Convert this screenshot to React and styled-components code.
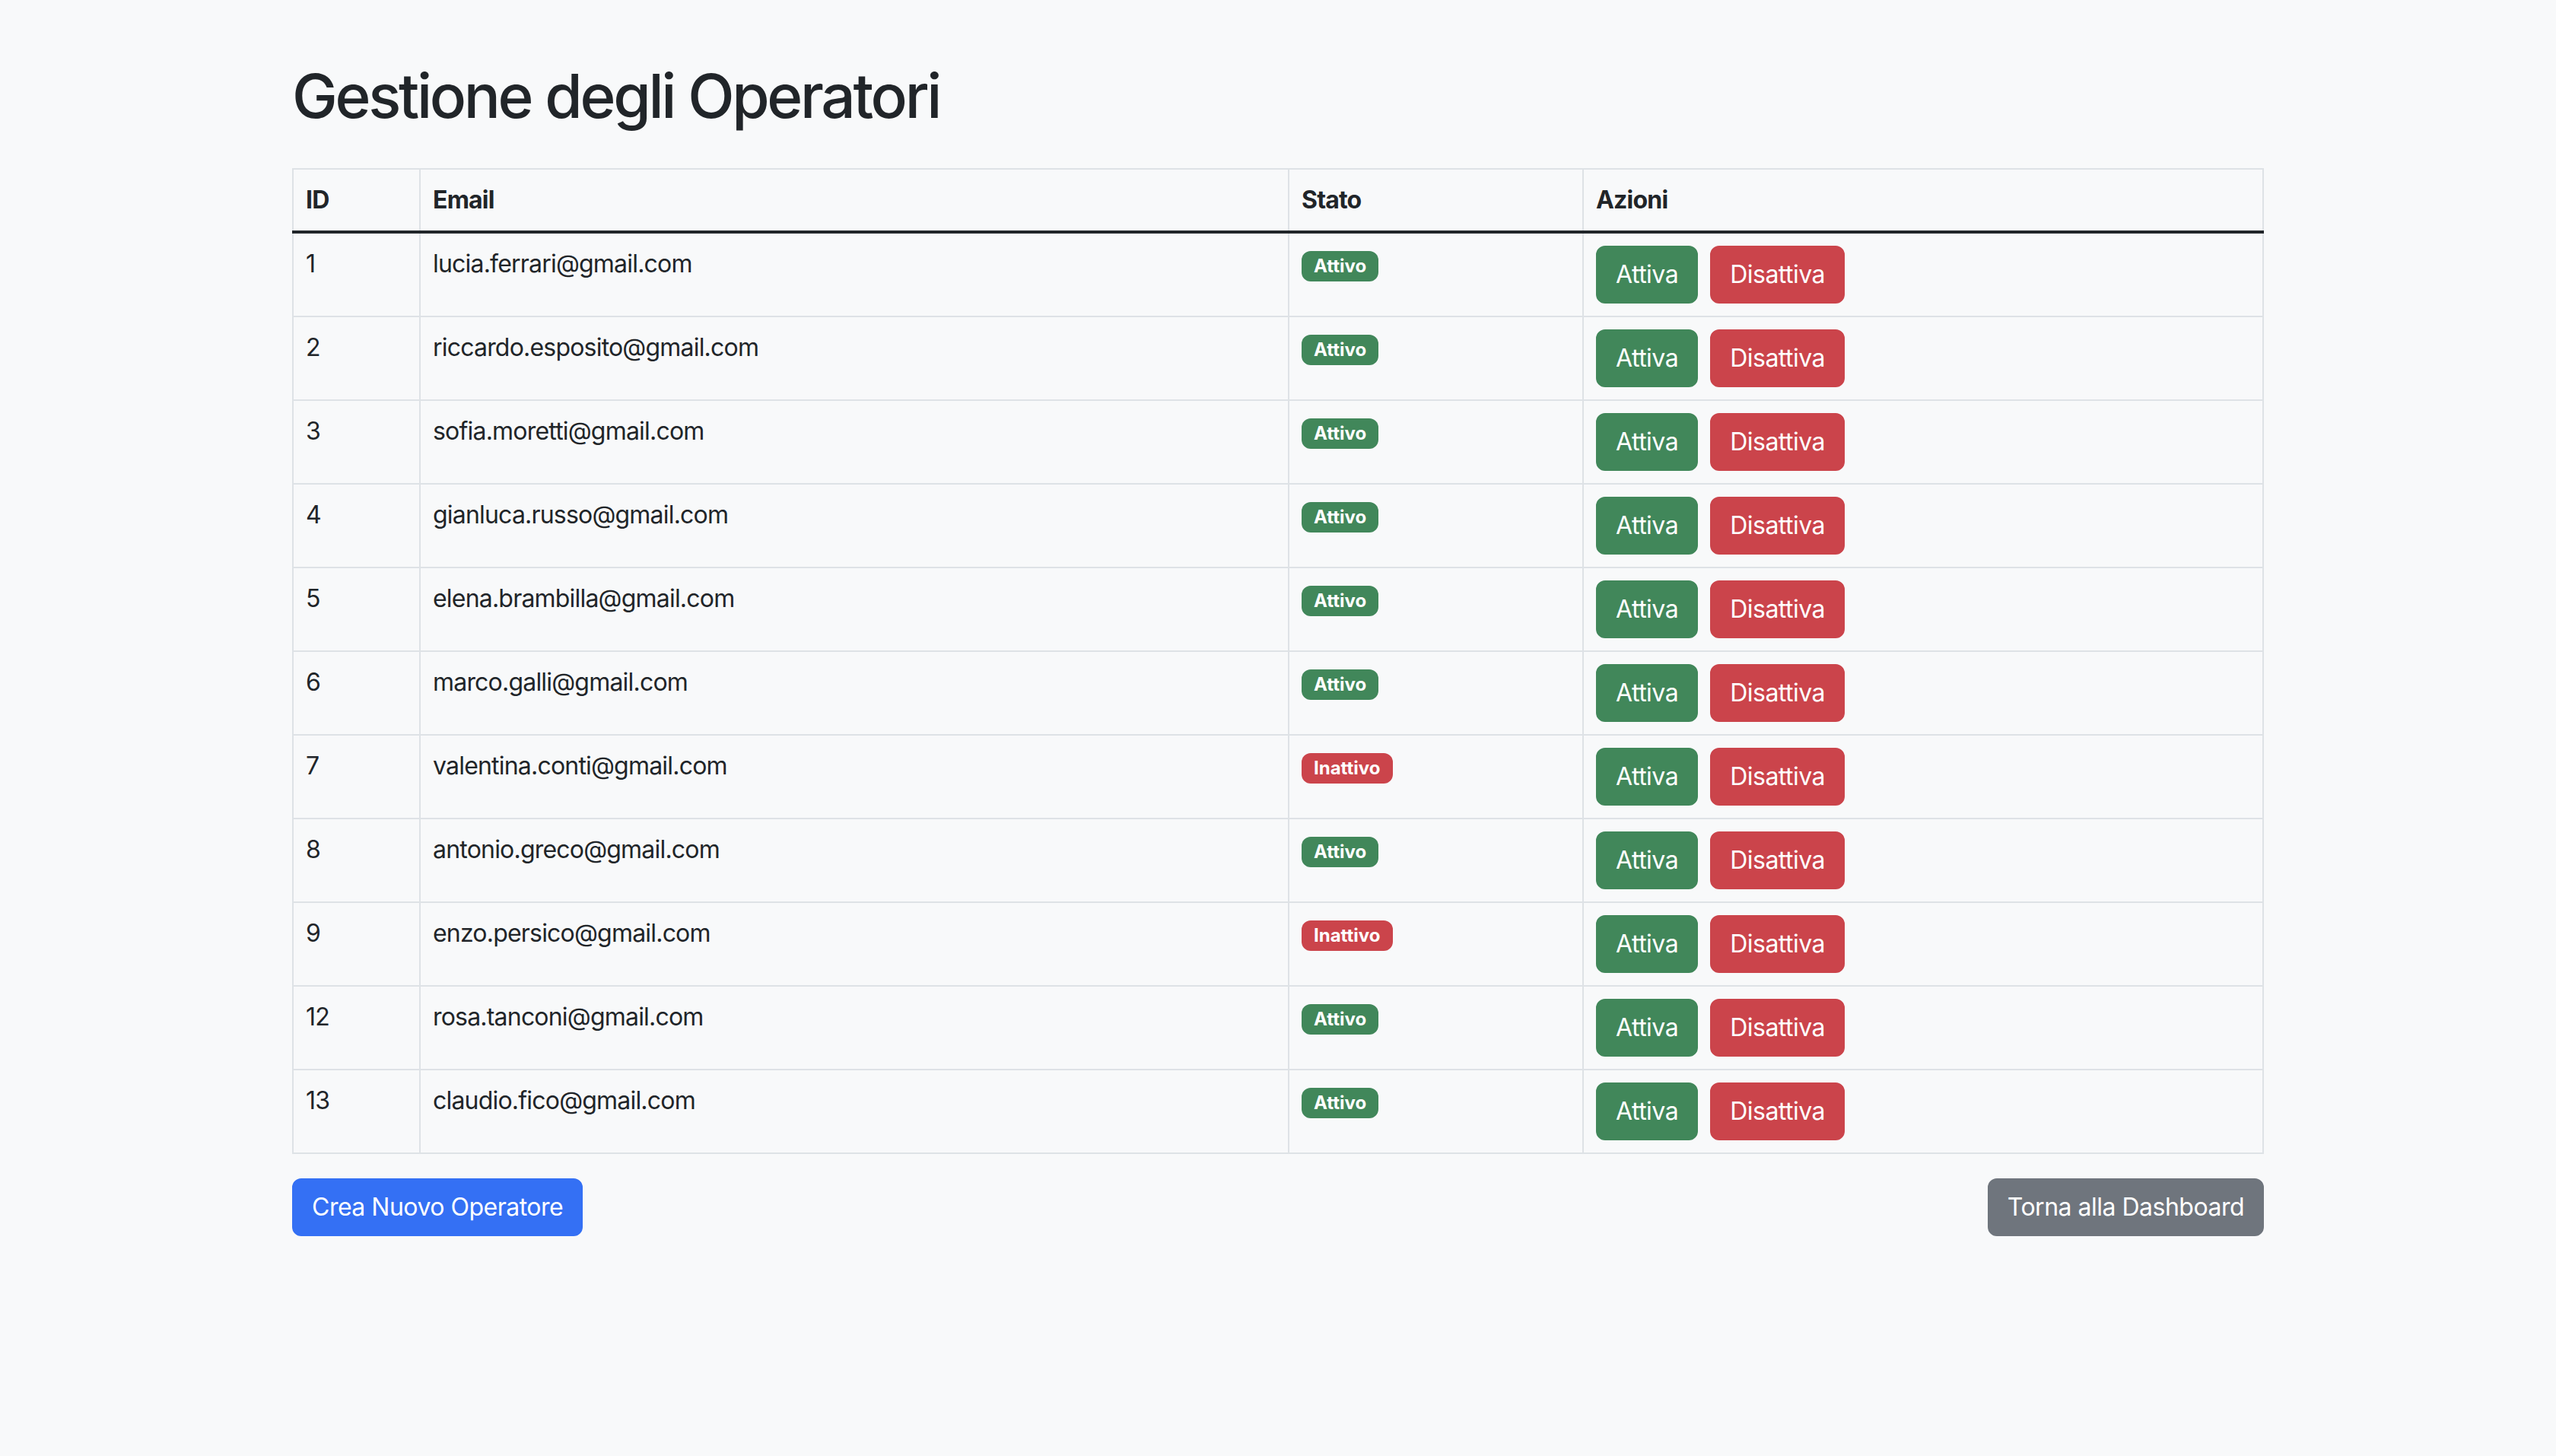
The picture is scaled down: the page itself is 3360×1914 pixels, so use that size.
import React from 'react'
import styled, { createGlobalStyle } from 'styled-components'

const GlobalStyle = createGlobalStyle`
  html, body {
    margin: 0;
    padding: 0;
    background: #f8f9fa;
  }
  body {
    font-family: Inter, "Noto Sans", "Liberation Sans", sans-serif;
    color: #212529;
    font-size: 32px;
    line-height: 1.5;
  }
`

const Page = styled.div`
  width: 2592px;
  margin: 0 auto;
  padding-top: 78px;
  padding-bottom: 96px;
`

const Title = styled.h1`
  margin: 0 0 47px;
  font-size: 80px;
  font-weight: 500;
  line-height: 1.2;
  letter-spacing: -3.3px;
  color: #212529;
`

const Table = styled.table`
  width: 100%;
  border-collapse: collapse;
  border: 2px solid #dee2e6;
  table-layout: fixed;
  letter-spacing: -0.8px;
`

const HeadCell = styled.th`
  width: ${p => (p.$w ? `${p.$w - 34}px` : 'auto')};
  text-align: left;
  font-weight: 700;
  padding: 16px;
  vertical-align: bottom;
  border: 2px solid #dee2e6;
  border-bottom: 4px solid #212529;
  line-height: 48px;
`

const Cell = styled.td`
  padding: 16px;
  vertical-align: top;
  border: 2px solid #dee2e6;
  line-height: 48px;
`

const Badge = styled.span`
  display: inline-block;
  padding: 8px 16px;
  font-size: 24px;
  font-weight: 700;
  line-height: 1;
  letter-spacing: 0;
  color: #fff;
  border-radius: 12px;
  background: ${p => (p.$on ? '#41875a' : '#cb444b')};
`

const Actions = styled.div`
  display: flex;
  gap: 16px;
`

const Button = styled.button`
  font-family: inherit;
  font-size: 32px;
  line-height: 48px;
  letter-spacing: -0.5px;
  padding: 12px 24px;
  border: 2px solid ${p => p.$bg};
  border-radius: 12px;
  background: ${p => p.$bg};
  color: #fff;
  cursor: pointer;
`

const Footer = styled.div`
  display: flex;
  justify-content: space-between;
  margin-top: 32px;
`

const operators = [
  { id: 1, email: 'lucia.ferrari@gmail.com', active: true },
  { id: 2, email: 'riccardo.esposito@gmail.com', active: true },
  { id: 3, email: 'sofia.moretti@gmail.com', active: true },
  { id: 4, email: 'gianluca.russo@gmail.com', active: true },
  { id: 5, email: 'elena.brambilla@gmail.com', active: true },
  { id: 6, email: 'marco.galli@gmail.com', active: true },
  { id: 7, email: 'valentina.conti@gmail.com', active: false },
  { id: 8, email: 'antonio.greco@gmail.com', active: true },
  { id: 9, email: 'enzo.persico@gmail.com', active: false },
  { id: 12, email: 'rosa.tanconi@gmail.com', active: true },
  { id: 13, email: 'claudio.fico@gmail.com', active: true },
]

function App() {
  return (
    <>
      <GlobalStyle />
      <Page>
        <Title>Gestione degli Operatori</Title>
        <Table>
          <thead>
            <tr>
              <HeadCell $w={167}>ID</HeadCell>
              <HeadCell $w={1142}>Email</HeadCell>
              <HeadCell $w={387}>Stato</HeadCell>
              <HeadCell>Azioni</HeadCell>
            </tr>
          </thead>
          <tbody>
            {operators.map(op => (
              <tr key={op.id}>
                <Cell>{op.id}</Cell>
                <Cell>{op.email}</Cell>
                <Cell>
                  <Badge $on={op.active}>{op.active ? 'Attivo' : 'Inattivo'}</Badge>
                </Cell>
                <Cell>
                  <Actions>
                    <Button $bg="#41875a">Attiva</Button>
                    <Button $bg="#cb444b">Disattiva</Button>
                  </Actions>
                </Cell>
              </tr>
            ))}
          </tbody>
        </Table>
        <Footer>
          <Button $bg="#3470f4">Crea Nuovo Operatore</Button>
          <Button $bg="#6f757d">Torna alla Dashboard</Button>
        </Footer>
      </Page>
    </>
  )
}

export default App
